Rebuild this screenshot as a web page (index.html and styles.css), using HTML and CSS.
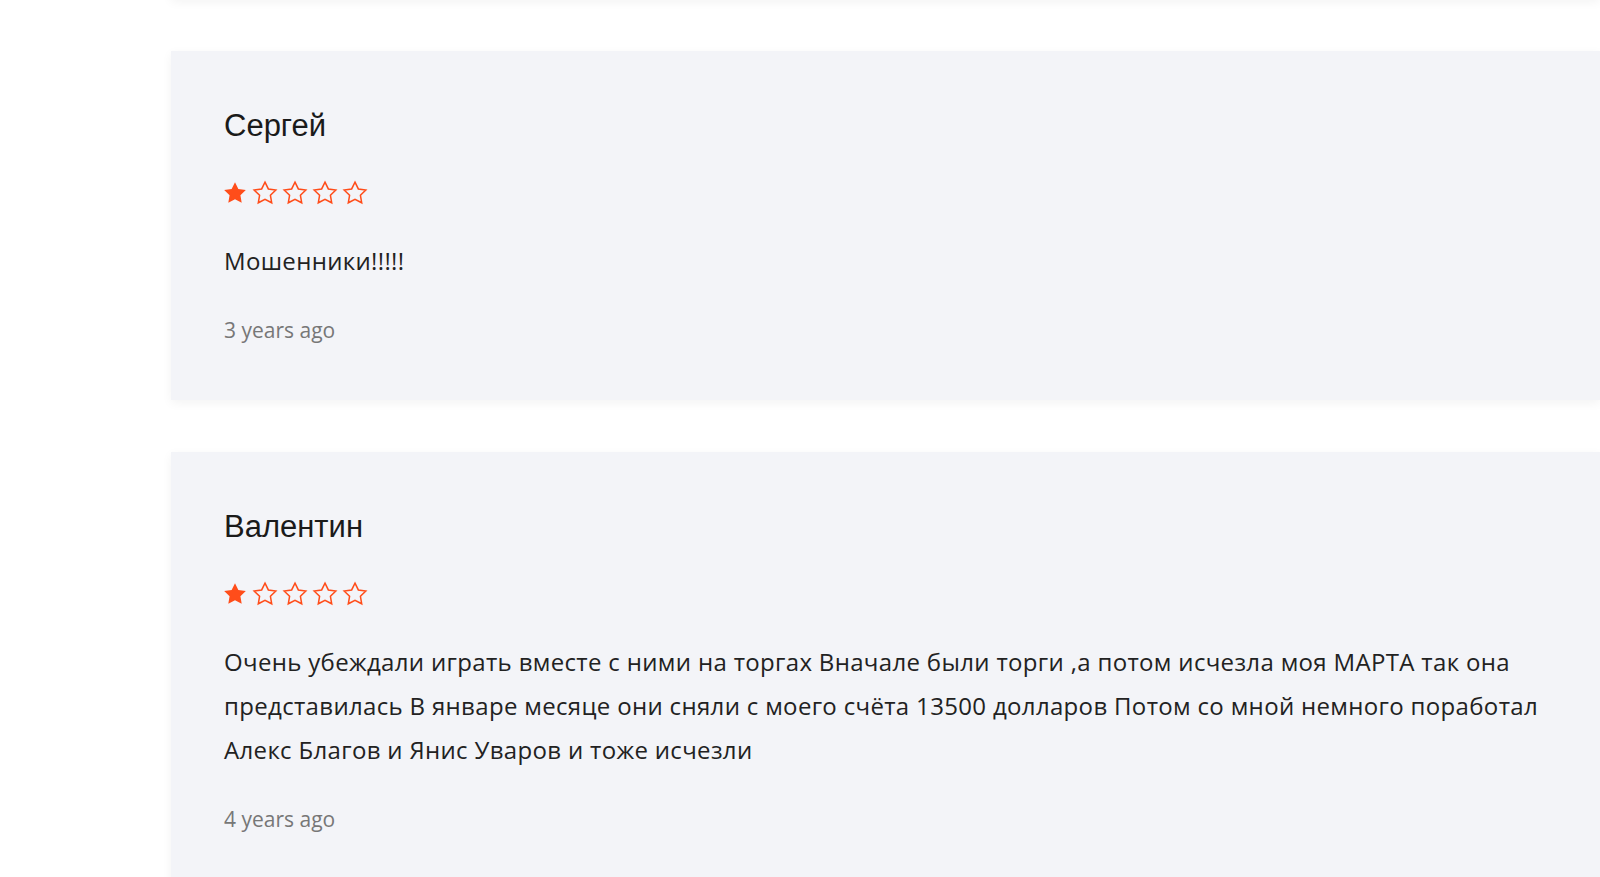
FILE: index.html
```html
<!DOCTYPE html>
<html lang="ru">
<head>
    <meta charset="UTF-8">
    <meta name="viewport" content="width=device-width, initial-scale=1.0">
    <title>Отзывы</title>
    <link rel="stylesheet" href="styles.css">
</head>
<body>
    <div class="reviews">
        <div class="review review-prev"></div>

        <div class="review">
            <div class="review-name">Сергей</div>
            <div class="stars">
                <svg class="star" viewBox="0 0 24 24"><path class="full" d="M12 2l3.09 6.26L22 9.27l-5 4.87 1.18 6.88L12 17.77l-6.18 3.25L7 14.14 2 9.27l6.91-1.01L12 2z"/></svg>
                <svg class="star" viewBox="0 0 24 24"><path class="empty" d="M12 2l3.09 6.26L22 9.27l-5 4.87 1.18 6.88L12 17.77l-6.18 3.25L7 14.14 2 9.27l6.91-1.01L12 2z"/></svg>
                <svg class="star" viewBox="0 0 24 24"><path class="empty" d="M12 2l3.09 6.26L22 9.27l-5 4.87 1.18 6.88L12 17.77l-6.18 3.25L7 14.14 2 9.27l6.91-1.01L12 2z"/></svg>
                <svg class="star" viewBox="0 0 24 24"><path class="empty" d="M12 2l3.09 6.26L22 9.27l-5 4.87 1.18 6.88L12 17.77l-6.18 3.25L7 14.14 2 9.27l6.91-1.01L12 2z"/></svg>
                <svg class="star" viewBox="0 0 24 24"><path class="empty" d="M12 2l3.09 6.26L22 9.27l-5 4.87 1.18 6.88L12 17.77l-6.18 3.25L7 14.14 2 9.27l6.91-1.01L12 2z"/></svg>
            </div>
            <p class="review-text">Мошенники!!!!!</p>
            <div class="review-date">3 years ago</div>
        </div>

        <div class="review">
            <div class="review-name">Валентин</div>
            <div class="stars">
                <svg class="star" viewBox="0 0 24 24"><path class="full" d="M12 2l3.09 6.26L22 9.27l-5 4.87 1.18 6.88L12 17.77l-6.18 3.25L7 14.14 2 9.27l6.91-1.01L12 2z"/></svg>
                <svg class="star" viewBox="0 0 24 24"><path class="empty" d="M12 2l3.09 6.26L22 9.27l-5 4.87 1.18 6.88L12 17.77l-6.18 3.25L7 14.14 2 9.27l6.91-1.01L12 2z"/></svg>
                <svg class="star" viewBox="0 0 24 24"><path class="empty" d="M12 2l3.09 6.26L22 9.27l-5 4.87 1.18 6.88L12 17.77l-6.18 3.25L7 14.14 2 9.27l6.91-1.01L12 2z"/></svg>
                <svg class="star" viewBox="0 0 24 24"><path class="empty" d="M12 2l3.09 6.26L22 9.27l-5 4.87 1.18 6.88L12 17.77l-6.18 3.25L7 14.14 2 9.27l6.91-1.01L12 2z"/></svg>
                <svg class="star" viewBox="0 0 24 24"><path class="empty" d="M12 2l3.09 6.26L22 9.27l-5 4.87 1.18 6.88L12 17.77l-6.18 3.25L7 14.14 2 9.27l6.91-1.01L12 2z"/></svg>
            </div>
            <p class="review-text">Очень убеждали играть вместе с ними на торгах Вначале были торги ,а потом исчезла моя МАРТА так она представилась В январе месяце они сняли с моего счёта 13500 долларов Потом со мной немного поработал Алекс Благов и Янис Уваров и тоже исчезли</p>
            <div class="review-date">4 years ago</div>
        </div>
    </div>
</body>
</html>
```

FILE: styles.css
```css
body {
    margin: 0;
    background-color: #fff;
    font-family: 'Open Sans', sans-serif;
    color: #222;
    overflow: hidden;
}
.reviews {
    display: flex;
    flex-direction: column;
    gap: 52px;
    margin-top: -350px;
    padding-left: 171px;
}
.review {
    background-color: #f3f4f8;
    padding: 57px 60px 55px 53px;
    box-shadow: 0 3px 10px rgba(0,0,0,0.05);
}
.review-prev {
    height: 237px;
}
.review-name {
    font-family: 'Liberation Sans', Arial, sans-serif;
    font-size: 31px;
    line-height: 36px;
    color: #1a1a1a;
}
.stars {
    display: flex;
    gap: 4px;
    margin-top: 36px;
    margin-left: -2px;
}
.star {
    width: 26px;
    height: 26px;
}
.star .full {
    fill: #ff4d1a;
}
.star .empty {
    fill: none;
    stroke: #ff4d1a;
    stroke-width: 1.4;
    stroke-linejoin: miter;
}
.review-text {
    margin: 33px 0 0;
    font-size: 24px;
    line-height: 44px;
    letter-spacing: 0.33px;
    color: #222;
}
.review-date {
    margin-top: 32px;
    font-size: 21px;
    line-height: 30px;
    color: #777;
}
```
